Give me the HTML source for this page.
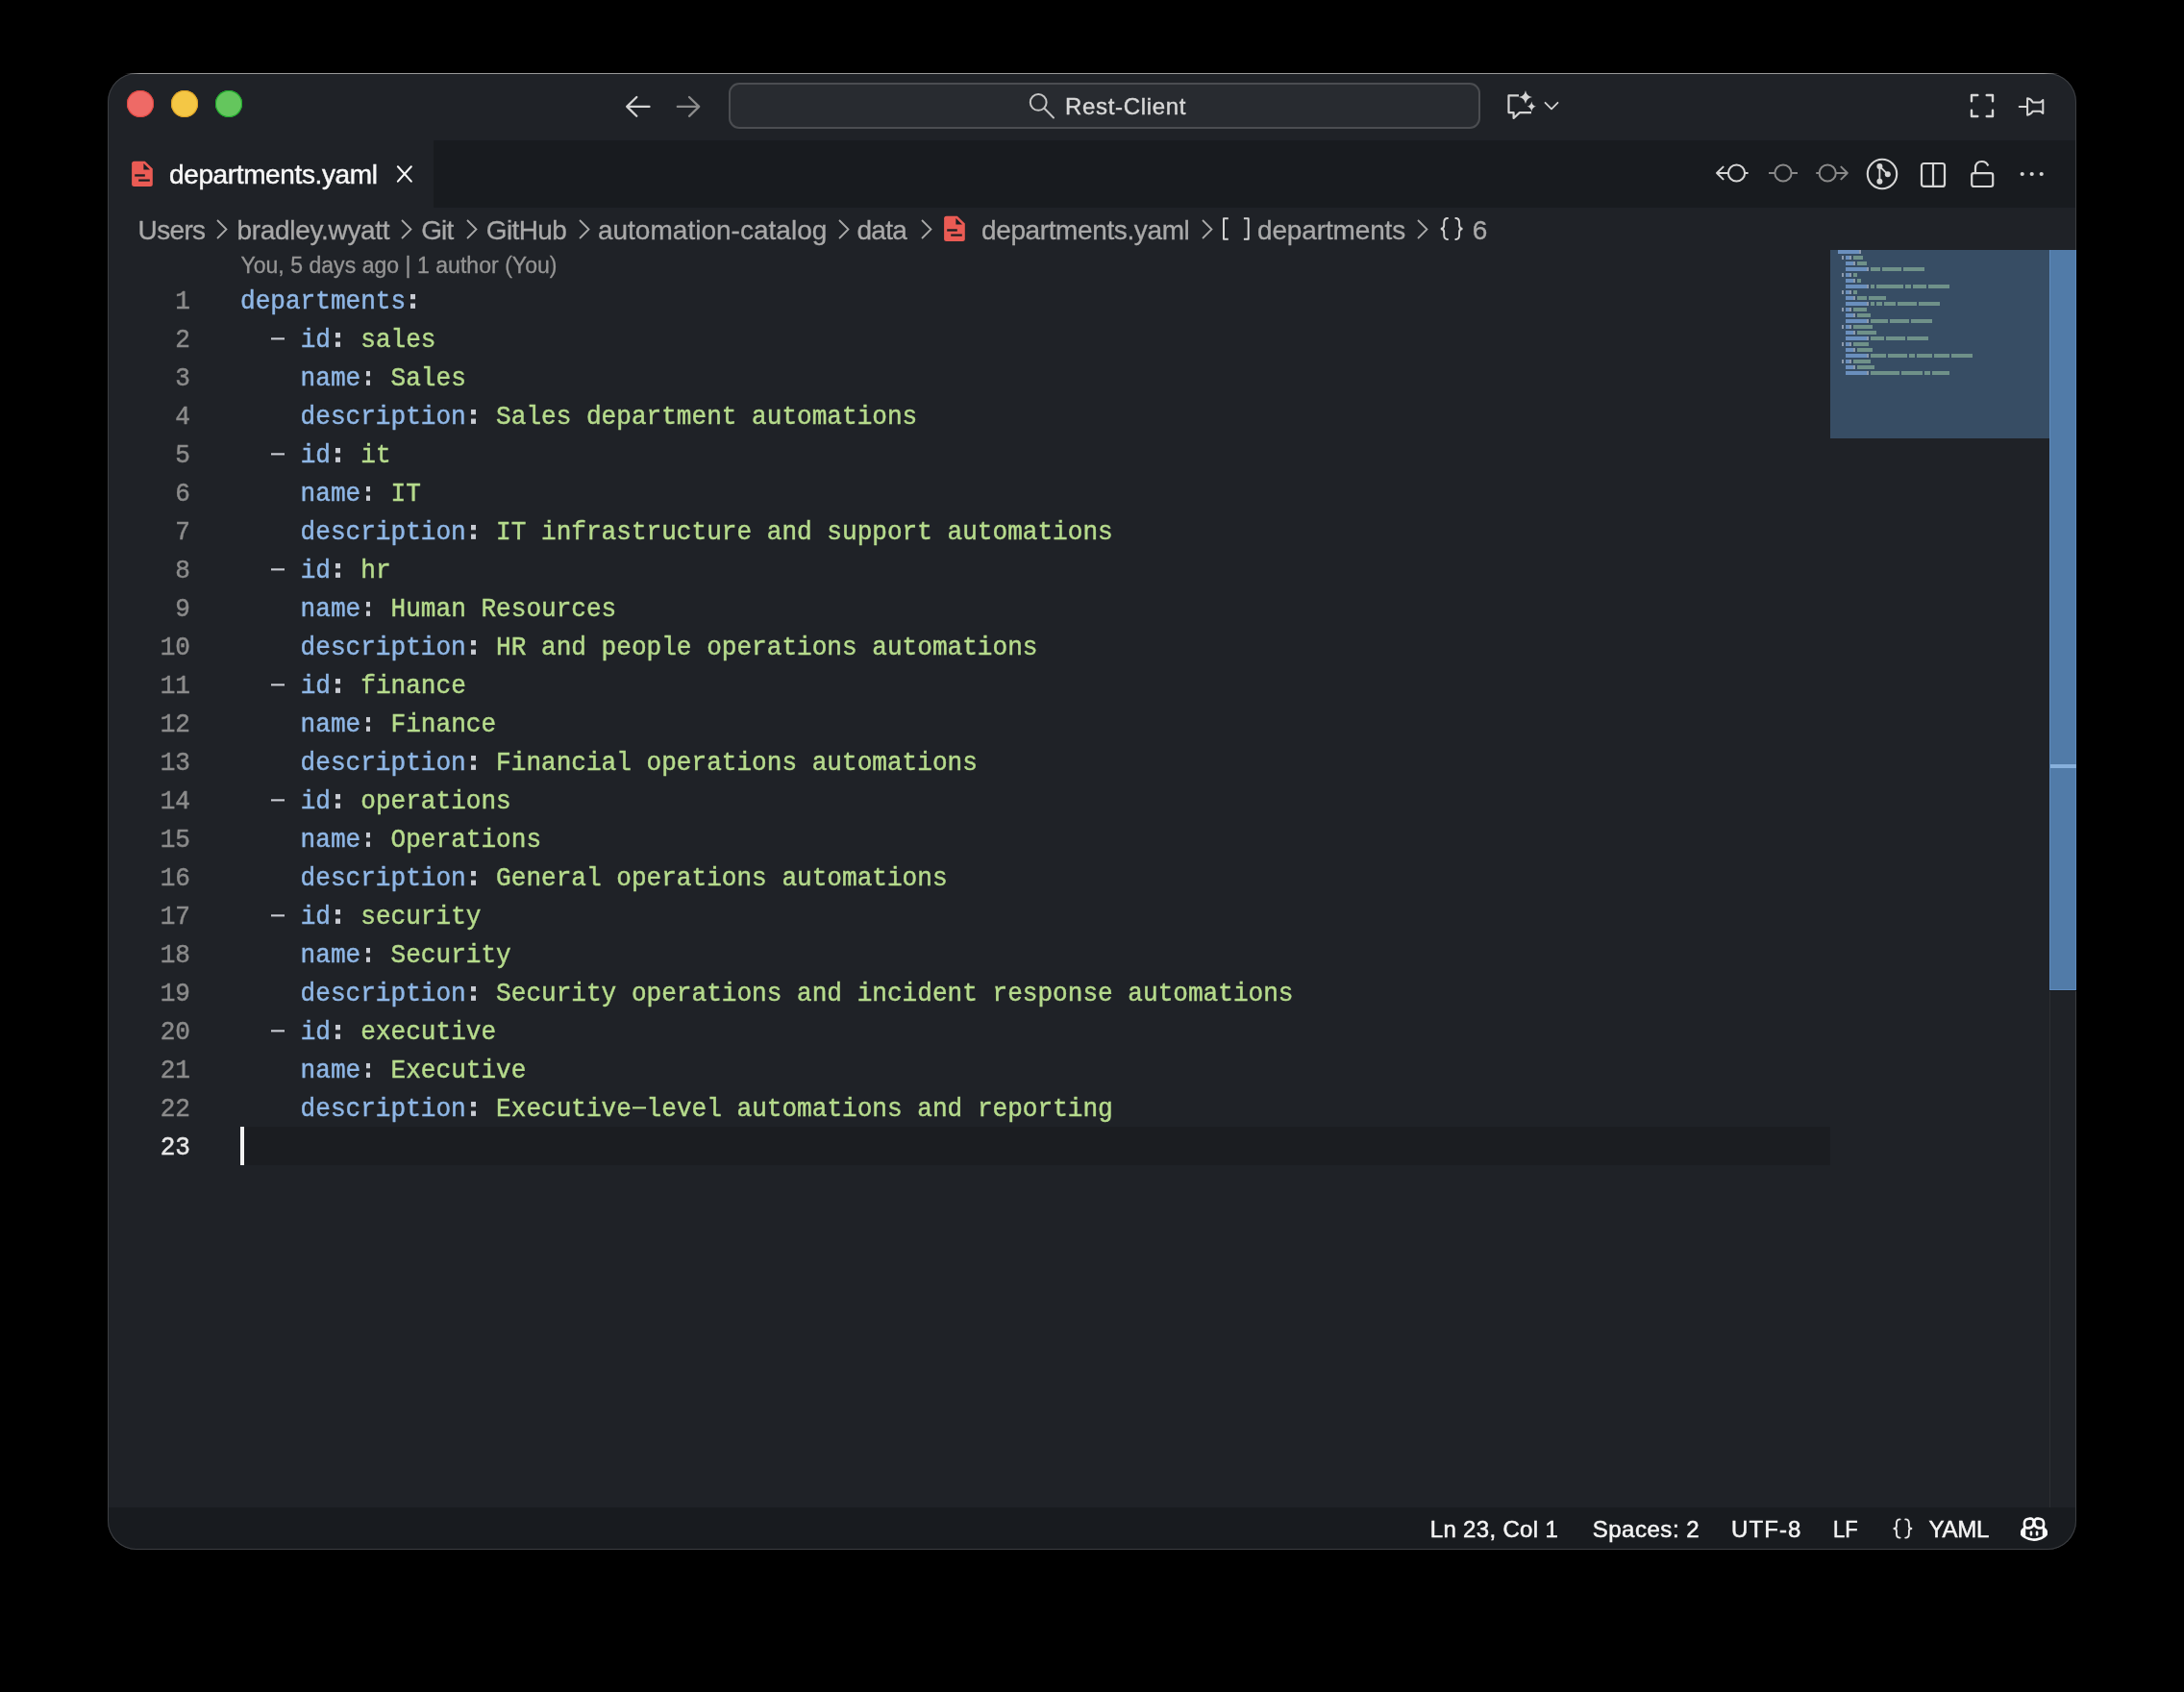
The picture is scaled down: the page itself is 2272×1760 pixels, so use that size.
<!DOCTYPE html>
<html><head><meta charset="utf-8">
<style>
html,body{margin:0;padding:0;background:#000;width:2272px;height:1760px;overflow:hidden}
*{box-sizing:border-box}
.abs{position:absolute}
#win{position:absolute;left:112px;top:76px;width:2048px;height:1536px;border-radius:30px;overflow:hidden;background:#1f2227}
#winborder{position:absolute;left:112px;top:76px;width:2048px;height:1536px;border-radius:30px;box-shadow:inset 0 0 0 1px #3c3e42;pointer-events:none}
.tl{position:absolute;width:28px;height:28px;border-radius:50%}
#tabbar{position:absolute;left:339px;top:70px;width:1709px;height:70px;background:#181b1f}
#status{position:absolute;left:0;top:1492px;width:2048px;height:44px;background:#181b1f}
#fg{position:absolute;left:0;top:0;width:2272px;height:1760px;font-family:"Liberation Sans",sans-serif;will-change:transform;-webkit-font-smoothing:antialiased}
.ln{position:absolute;left:112px;width:86px;text-align:right;font-family:"Liberation Mono",monospace;font-size:26.08px;line-height:40px;color:#8b8b8b;white-space:pre;transform:scaleY(1.065);transform-origin:0 29px;-webkit-text-stroke-width:0.45px}
.ln.act{color:#e8e8e8}
.cl{position:absolute;left:250px;font-family:"Liberation Mono",monospace;font-size:26.08px;line-height:40px;white-space:pre;color:#c8c8c8;transform:scaleY(1.065);transform-origin:0 29px;-webkit-text-stroke-width:0.45px}
.k{color:#8fb7e6}
.v{color:#b6db8c}
.p{color:#c9c9c9}
.c,.d{position:relative;color:transparent}
.c::before,.c::after,.d::before{content:"";position:absolute;background:#c8cbd2}
.c::before{left:5.3px;width:4.6px;top:7.6px;height:5.1px}
.c::after{left:5.3px;width:4.6px;top:17.0px;height:4.7px}
.d::before{left:1px;width:13.65px;top:12.8px;height:2.4px}
.v .d::before{background:#b6db8c}
.bc{position:absolute;top:218px;font-size:26px;line-height:40px;color:#a9a9a9;white-space:pre}
.st{position:absolute;top:1568px;font-size:24px;line-height:44px;color:#e6e6e6;white-space:pre}
svg{position:absolute;overflow:visible}
</style></head>
<body>
<div id="win">
  <div class="tl" style="left:20px;top:18px;background:#ee6a66;box-shadow:inset 0 0 0 1px #e0443e"></div>
  <div class="tl" style="left:66px;top:18px;background:#f4c745;box-shadow:inset 0 0 0 1px #dea123"></div>
  <div class="tl" style="left:112px;top:18px;background:#64c65d;box-shadow:inset 0 0 0 1px #1aab29"></div>
  <div id="tabbar"></div>
  <div id="status"></div>
  <!-- current line highlight -->
  <div class="abs" style="left:142px;top:1096px;width:1650px;height:40px;background:#1b1d21"></div>
  <!-- minimap slider -->
  <div class="abs" style="left:1792px;top:184px;width:228px;height:196px;background:#374d64"></div>
  <!-- scrollbar track border -->
  <div class="abs" style="left:2020px;top:380px;width:1px;height:1112px;background:#2c2e32"></div>
</div>

<div id="winborder"></div>
<div class="abs" style="left:130px;top:76px;width:2012px;height:1px;background:linear-gradient(90deg,rgba(154,154,154,0),#9a9a9a 16px,#9a9a9a calc(100% - 16px),rgba(154,154,154,0))"></div>
<div class="abs" style="left:2132px;top:260px;width:28px;height:770px;background:#517ba8;box-shadow:inset 1px 0 0 #5f8cc0,inset -1px 0 0 #5f8cc0,inset 0 -1px 0 #5f8cc0"></div>
<div class="abs" style="left:2132px;top:1030px;width:28px;height:1px;background:#1a1b1e"></div>
<div class="abs" style="left:2133px;top:795px;width:27px;height:4px;background:#87b0dc"></div>
<div id="fg">
  <!-- title bar nav arrows -->
  <svg style="left:650px;top:98px" width="28" height="26" viewBox="0 0 28 26"><path d="M12.3 3 L2.2 12.9 L12.3 22.8 M2.2 12.9 H25.5" fill="none" stroke="#d4d4d4" stroke-width="2.3" stroke-linecap="round" stroke-linejoin="round"/></svg>
  <svg style="left:702px;top:98px" width="28" height="26" viewBox="0 0 28 26"><path d="M15 3 L25.2 12.9 L15 22.8 M25.2 12.9 H2.8" fill="none" stroke="#8c8c8c" stroke-width="2.3" stroke-linecap="round" stroke-linejoin="round"/></svg>
  <!-- search box -->
  <div class="abs" style="left:758px;top:86px;width:782px;height:48px;border-radius:11px;border:2px solid #4b4d51;background:#282b30"></div>
  <svg style="left:1068px;top:95px" width="32" height="32" viewBox="0 0 32 32"><circle cx="12.2" cy="11.4" r="8.4" fill="none" stroke="#c4c4c4" stroke-width="2"/><path d="M18.4 17.8 L28 27.5" stroke="#c4c4c4" stroke-width="2" stroke-linecap="round"/></svg>
  
  <!-- copilot chat icon -->
  <svg style="left:1560px;top:90px" width="70" height="40" viewBox="0 0 70 40">
    <path d="M20 9.3 H9.5 V27.1 H14.6 V33 L20.8 27.1 H33" fill="none" stroke="#d4d4d4" stroke-width="2.2" stroke-linejoin="round"/>
    <path d="M27 4 Q28 10 34 11 Q28 12 27 18 Q26 12 20 11 Q26 10 27 4 Z" fill="#d4d4d4"/>
    <path d="M33.3 15.5 Q34 20 38 20.8 Q34 21.5 33.3 26 Q32.6 21.5 28.6 20.8 Q32.6 20 33.3 15.5 Z" fill="#d4d4d4"/>
    <path d="M47.5 16.8 L54 23.3 L60.5 16.8" fill="none" stroke="#d4d4d4" stroke-width="1.8" stroke-linecap="round" stroke-linejoin="round"/>
  </svg>
  <!-- fullscreen icon -->
  <svg style="left:2048px;top:96px" width="28" height="28" viewBox="0 0 28 28"><path d="M3 9.3 V3 H9.3 M18.7 3 H25 V9.3 M25 18.7 V25 H18.7 M9.3 25 H3 V18.7" fill="none" stroke="#d6d6d6" stroke-width="2.4" stroke-linecap="round" stroke-linejoin="round"/></svg>
  <!-- pin icon -->
  <svg style="left:2098px;top:98px" width="32" height="26" viewBox="0 0 32 26"><path d="M2.7 12.9 H11 M11.1 4.2 V21.7 Q15.2 21 16.6 17.7 H24.6 L27.3 19.9 V6.1 L24.6 8.4 H16.6 Q15.2 4.9 11.1 4.2 Z" fill="none" stroke="#d6d6d6" stroke-width="2" stroke-linejoin="round" stroke-linecap="round"/></svg>

  <!-- tab -->
  <svg style="left:136px;top:166px" width="24" height="30" viewBox="0 0 24 30">
    <path d="M3.6 1.8 H14.8 L22.8 9.4 V25.5 Q22.8 28 20.3 28 H3.6 Q1.1 28 1.1 25.5 V4.3 Q1.1 1.8 3.6 1.8 Z" fill="#ea5b54"/>
    <path d="M13.4 3.9 V10.5 H20 Z" fill="#1b1e22"/>
    <rect x="4.2" y="15.3" width="10.6" height="2.3" fill="#1b1e22"/>
    <rect x="8.2" y="20.5" width="11.6" height="2.2" fill="#1b1e22"/>
  </svg>
  
  <svg style="left:410px;top:170px" width="22" height="22" viewBox="0 0 22 22"><path d="M3.9 3.3 L17.8 18.6 M17.8 3.3 L3.9 18.6" stroke="#f8f8f8" stroke-width="2.1" stroke-linecap="round"/></svg>

  <!-- tab bar right icons -->
  <svg style="left:1780px;top:164px" width="44" height="32" viewBox="0 0 44 32"><circle cx="26.5" cy="16" r="8.6" fill="none" stroke="#d6d6d6" stroke-width="2"/><path d="M35.1 16 H37.9 M17.9 16 H6 M12.6 9.6 L6 16 L12.6 22.4" fill="none" stroke="#d6d6d6" stroke-width="2" stroke-linecap="round" stroke-linejoin="round"/></svg>
  <svg style="left:1836px;top:164px" width="40" height="32" viewBox="0 0 40 32"><circle cx="19" cy="16" r="8.6" fill="none" stroke="#8a8a8a" stroke-width="2"/><path d="M4 16 H10.4 M27.6 16 H34" fill="none" stroke="#8a8a8a" stroke-width="2" stroke-linecap="butt"/></svg>
  <svg style="left:1886px;top:164px" width="44" height="32" viewBox="0 0 44 32"><circle cx="15.2" cy="16" r="8.6" fill="none" stroke="#8a8a8a" stroke-width="2"/><path d="M4 16 H6.6 M23.8 16 H35.8 M29.4 9.6 L35.8 16 L29.4 22.4" fill="none" stroke="#8a8a8a" stroke-width="2" stroke-linecap="round" stroke-linejoin="round"/></svg>
  <svg style="left:1940px;top:163px" width="36" height="36" viewBox="0 0 36 36"><circle cx="18" cy="18" r="15.2" fill="none" stroke="#d6d6d6" stroke-width="2.1"/><path d="M15.4 10 V25.8 M15.4 10 L23.8 18.3" stroke="#d6d6d6" stroke-width="1.8"/><circle cx="15.4" cy="10" r="3" fill="#d6d6d6"/><circle cx="23.8" cy="18.3" r="3" fill="#d6d6d6"/><circle cx="15.4" cy="25.8" r="3" fill="#d6d6d6"/></svg>
  <svg style="left:1996px;top:167px" width="30" height="30" viewBox="0 0 30 30"><rect x="3" y="3" width="24" height="23.9" rx="2.5" fill="none" stroke="#d6d6d6" stroke-width="2.2"/><path d="M15 3 V26.9" stroke="#d6d6d6" stroke-width="2.2"/></svg>
  <svg style="left:2048px;top:164px" width="28" height="34" viewBox="0 0 28 34"><rect x="3.2" y="16.2" width="22" height="13.8" rx="2.2" fill="none" stroke="#d6d6d6" stroke-width="2.2"/><path d="M7 16 V11 Q7 4 13.8 4 Q18.5 4 20.3 8.5" fill="none" stroke="#d6d6d6" stroke-width="2.2"/></svg>
  <svg style="left:2098px;top:176px" width="32" height="10" viewBox="0 0 32 10"><circle cx="5.7" cy="5" r="2.1" fill="#d6d6d6"/><circle cx="15.7" cy="5" r="2.1" fill="#d6d6d6"/><circle cx="25.7" cy="5" r="2.1" fill="#d6d6d6"/></svg>

  <!-- breadcrumbs -->

  <svg style="left:0;top:0" width="2272" height="1760" viewBox="0 0 2272 1760">
    <path d="M1277.8 227.2 H1273 V248.8 H1277.8 M1293.9 227.2 H1298.7 V248.8 H1293.9" fill="none" stroke="#d2d2d2" stroke-width="2" stroke-linejoin="round" stroke-linecap="butt"/>
    <path d="M1506 227 C1503.2 227 1502.2 228.8 1502.2 231.5 V234.6 C1502.2 236.8 1501 237.9 1498.8 238 C1501 238.1 1502.2 239.2 1502.2 241.4 V244.5 C1502.2 247.2 1503.2 249 1506 249" fill="none" stroke="#d2d2d2" stroke-width="1.9" stroke-linecap="round"/>
    <path d="M1514.3 227 C1517.1 227 1518.1 228.8 1518.1 231.5 V234.6 C1518.1 236.8 1519.3 237.9 1521.5 238 C1519.3 238.1 1518.1 239.2 1518.1 241.4 V244.5 C1518.1 247.2 1517.1 249 1514.3 249" fill="none" stroke="#d2d2d2" stroke-width="1.9" stroke-linecap="round"/>
    <path d="M1976.6 1580.4 C1973.9 1580.4 1972.9 1582.1 1972.9 1584.7 V1587.7 C1972.9 1589.8 1971.7 1590 1969.6 1590 C1971.7 1590 1972.9 1590.2 1972.9 1592.3 V1595.3 C1972.9 1597.9 1973.9 1599.6 1976.6 1599.6" fill="none" stroke="#e6e6e6" stroke-width="1.9" stroke-linecap="round"/>
    <path d="M1982.2 1580.4 C1984.9 1580.4 1985.9 1582.1 1985.9 1584.7 V1587.7 C1985.9 1589.8 1987.1 1590 1989.2 1590 C1987.1 1590 1985.9 1590.2 1985.9 1592.3 V1595.3 C1985.9 1597.9 1984.9 1599.6 1982.2 1599.6" fill="none" stroke="#e6e6e6" stroke-width="1.9" stroke-linecap="round"/>
  </svg>
  <div class="abs" style="left:176px;top:167.60px;font-size:28px;line-height:28px;letter-spacing:-0.374px;color:#f8f8f8;white-space:pre;-webkit-text-stroke-width:0.45px;">departments.yaml</div>
<div class="abs" style="left:143.6px;top:225.80px;font-size:28px;line-height:28px;letter-spacing:-0.654px;color:#a9a9a9;white-space:pre;-webkit-text-stroke-width:0.3px;">Users</div>
<div class="abs" style="left:246.5px;top:225.80px;font-size:28px;line-height:28px;letter-spacing:-0.317px;color:#a9a9a9;white-space:pre;-webkit-text-stroke-width:0.3px;">bradley.wyatt</div>
<div class="abs" style="left:438.2px;top:225.80px;font-size:28px;line-height:28px;letter-spacing:-0.85px;color:#a9a9a9;white-space:pre;-webkit-text-stroke-width:0.3px;">Git</div>
<div class="abs" style="left:505.8px;top:225.80px;font-size:28px;line-height:28px;letter-spacing:-0.614px;color:#a9a9a9;white-space:pre;-webkit-text-stroke-width:0.3px;">GitHub</div>
<div class="abs" style="left:621.9px;top:225.80px;font-size:28px;line-height:28px;letter-spacing:0.016px;color:#a9a9a9;white-space:pre;-webkit-text-stroke-width:0.3px;">automation-catalog</div>
<div class="abs" style="left:891.5px;top:225.80px;font-size:28px;line-height:28px;letter-spacing:-0.741px;color:#a9a9a9;white-space:pre;-webkit-text-stroke-width:0.3px;">data</div>
<div class="abs" style="left:1021px;top:225.80px;font-size:28px;line-height:28px;letter-spacing:-0.381px;color:#a9a9a9;white-space:pre;-webkit-text-stroke-width:0.3px;">departments.yaml</div>
<div class="abs" style="left:1308px;top:225.80px;font-size:28px;line-height:28px;letter-spacing:-0.144px;color:#a9a9a9;white-space:pre;-webkit-text-stroke-width:0.3px;">departments</div>
<div class="abs" style="left:1531.8px;top:225.80px;font-size:28px;line-height:28px;letter-spacing:0px;color:#a9a9a9;white-space:pre;-webkit-text-stroke-width:0.3px;">6</div>
<div class="abs" style="left:1108px;top:98.68px;font-size:24px;line-height:24px;letter-spacing:0.672px;color:#d8d8d8;white-space:pre;-webkit-text-stroke-width:0.4px;">Rest-Client</div>
<div class="abs" style="left:250.4px;top:264.73px;font-size:23px;line-height:23px;letter-spacing:0.041px;color:#959595;white-space:pre;-webkit-text-stroke-width:0.3px;">You, 5 days ago | 1 author (You)</div>
<div class="abs" style="left:1487.75px;top:1578.88px;font-size:24px;line-height:24px;letter-spacing:0.325px;color:#f4f4f4;white-space:pre;-webkit-text-stroke-width:0.5px;">Ln 23, Col 1</div>
<div class="abs" style="left:1656.7px;top:1578.88px;font-size:24px;line-height:24px;letter-spacing:0.527px;color:#f4f4f4;white-space:pre;-webkit-text-stroke-width:0.5px;">Spaces: 2</div>
<div class="abs" style="left:1801px;top:1578.88px;font-size:24px;line-height:24px;letter-spacing:1.089px;color:#f4f4f4;white-space:pre;-webkit-text-stroke-width:0.5px;">UTF-8</div>
<div class="abs" style="left:1906.8px;top:1578.88px;font-size:24px;line-height:24px;letter-spacing:0px;color:#f4f4f4;white-space:pre;-webkit-text-stroke-width:0.5px;transform:scaleX(0.916);transform-origin:0 0;">LF</div>
<div class="abs" style="left:2006.6px;top:1578.88px;font-size:24px;line-height:24px;letter-spacing:-0.276px;color:#f4f4f4;white-space:pre;-webkit-text-stroke-width:0.5px;">YAML</div>
  <!-- chevrons -->
  <svg style="left:224px;top:227px" width="14" height="24" viewBox="0 0 14 24"><path d="M2 2 L11.5 11.5 L2 21" fill="none" stroke="#a9a9a9" stroke-width="1.8"/></svg>
  <svg style="left:416px;top:227px" width="14" height="24" viewBox="0 0 14 24"><path d="M2 2 L11.5 11.5 L2 21" fill="none" stroke="#a9a9a9" stroke-width="1.8"/></svg>
  <svg style="left:484px;top:227px" width="14" height="24" viewBox="0 0 14 24"><path d="M2 2 L11.5 11.5 L2 21" fill="none" stroke="#a9a9a9" stroke-width="1.8"/></svg>
  <svg style="left:601px;top:227px" width="14" height="24" viewBox="0 0 14 24"><path d="M2 2 L11.5 11.5 L2 21" fill="none" stroke="#a9a9a9" stroke-width="1.8"/></svg>
  <svg style="left:871px;top:227px" width="14" height="24" viewBox="0 0 14 24"><path d="M2 2 L11.5 11.5 L2 21" fill="none" stroke="#a9a9a9" stroke-width="1.8"/></svg>
  <svg style="left:957px;top:227px" width="14" height="24" viewBox="0 0 14 24"><path d="M2 2 L11.5 11.5 L2 21" fill="none" stroke="#a9a9a9" stroke-width="1.8"/></svg>
  <svg style="left:1249px;top:227px" width="14" height="24" viewBox="0 0 14 24"><path d="M2 2 L11.5 11.5 L2 21" fill="none" stroke="#a9a9a9" stroke-width="1.8"/></svg>
  <svg style="left:1473px;top:227px" width="14" height="24" viewBox="0 0 14 24"><path d="M2 2 L11.5 11.5 L2 21" fill="none" stroke="#a9a9a9" stroke-width="1.8"/></svg>
  <!-- breadcrumb file icon -->
  <svg style="left:980.6px;top:223.2px" width="24" height="30" viewBox="0 0 24 30">
    <path d="M3.6 1.8 H14.8 L22.8 9.4 V25.5 Q22.8 28 20.3 28 H3.6 Q1.1 28 1.1 25.5 V4.3 Q1.1 1.8 3.6 1.8 Z" fill="#ea5b54"/>
    <path d="M13.4 3.9 V10.5 H20 Z" fill="#1b1e22"/>
    <rect x="4.2" y="15.3" width="10.6" height="2.3" fill="#1b1e22"/>
    <rect x="8.2" y="20.5" width="11.6" height="2.2" fill="#1b1e22"/>
  </svg>

  <!-- blame -->
  

  <div class="ln" style="top:294px">1</div>
<div class="cl" style="top:294px"><span class="k">departments</span><span class="p"><span class=c>:</span></span></div>
<div class="ln" style="top:334px">2</div>
<div class="cl" style="top:334px"><span class="p">  <span class=d>-</span> </span><span class="k">id</span><span class="p"><span class=c>:</span> </span><span class="v">sales</span></div>
<div class="ln" style="top:374px">3</div>
<div class="cl" style="top:374px"><span class="p">    </span><span class="k">name</span><span class="p"><span class=c>:</span> </span><span class="v">Sales</span></div>
<div class="ln" style="top:414px">4</div>
<div class="cl" style="top:414px"><span class="p">    </span><span class="k">description</span><span class="p"><span class=c>:</span> </span><span class="v">Sales department automations</span></div>
<div class="ln" style="top:454px">5</div>
<div class="cl" style="top:454px"><span class="p">  <span class=d>-</span> </span><span class="k">id</span><span class="p"><span class=c>:</span> </span><span class="v">it</span></div>
<div class="ln" style="top:494px">6</div>
<div class="cl" style="top:494px"><span class="p">    </span><span class="k">name</span><span class="p"><span class=c>:</span> </span><span class="v">IT</span></div>
<div class="ln" style="top:534px">7</div>
<div class="cl" style="top:534px"><span class="p">    </span><span class="k">description</span><span class="p"><span class=c>:</span> </span><span class="v">IT infrastructure and support automations</span></div>
<div class="ln" style="top:574px">8</div>
<div class="cl" style="top:574px"><span class="p">  <span class=d>-</span> </span><span class="k">id</span><span class="p"><span class=c>:</span> </span><span class="v">hr</span></div>
<div class="ln" style="top:614px">9</div>
<div class="cl" style="top:614px"><span class="p">    </span><span class="k">name</span><span class="p"><span class=c>:</span> </span><span class="v">Human Resources</span></div>
<div class="ln" style="top:654px">10</div>
<div class="cl" style="top:654px"><span class="p">    </span><span class="k">description</span><span class="p"><span class=c>:</span> </span><span class="v">HR and people operations automations</span></div>
<div class="ln" style="top:694px">11</div>
<div class="cl" style="top:694px"><span class="p">  <span class=d>-</span> </span><span class="k">id</span><span class="p"><span class=c>:</span> </span><span class="v">finance</span></div>
<div class="ln" style="top:734px">12</div>
<div class="cl" style="top:734px"><span class="p">    </span><span class="k">name</span><span class="p"><span class=c>:</span> </span><span class="v">Finance</span></div>
<div class="ln" style="top:774px">13</div>
<div class="cl" style="top:774px"><span class="p">    </span><span class="k">description</span><span class="p"><span class=c>:</span> </span><span class="v">Financial operations automations</span></div>
<div class="ln" style="top:814px">14</div>
<div class="cl" style="top:814px"><span class="p">  <span class=d>-</span> </span><span class="k">id</span><span class="p"><span class=c>:</span> </span><span class="v">operations</span></div>
<div class="ln" style="top:854px">15</div>
<div class="cl" style="top:854px"><span class="p">    </span><span class="k">name</span><span class="p"><span class=c>:</span> </span><span class="v">Operations</span></div>
<div class="ln" style="top:894px">16</div>
<div class="cl" style="top:894px"><span class="p">    </span><span class="k">description</span><span class="p"><span class=c>:</span> </span><span class="v">General operations automations</span></div>
<div class="ln" style="top:934px">17</div>
<div class="cl" style="top:934px"><span class="p">  <span class=d>-</span> </span><span class="k">id</span><span class="p"><span class=c>:</span> </span><span class="v">security</span></div>
<div class="ln" style="top:974px">18</div>
<div class="cl" style="top:974px"><span class="p">    </span><span class="k">name</span><span class="p"><span class=c>:</span> </span><span class="v">Security</span></div>
<div class="ln" style="top:1014px">19</div>
<div class="cl" style="top:1014px"><span class="p">    </span><span class="k">description</span><span class="p"><span class=c>:</span> </span><span class="v">Security operations and incident response automations</span></div>
<div class="ln" style="top:1054px">20</div>
<div class="cl" style="top:1054px"><span class="p">  <span class=d>-</span> </span><span class="k">id</span><span class="p"><span class=c>:</span> </span><span class="v">executive</span></div>
<div class="ln" style="top:1094px">21</div>
<div class="cl" style="top:1094px"><span class="p">    </span><span class="k">name</span><span class="p"><span class=c>:</span> </span><span class="v">Executive</span></div>
<div class="ln" style="top:1134px">22</div>
<div class="cl" style="top:1134px"><span class="p">    </span><span class="k">description</span><span class="p"><span class=c>:</span> </span><span class="v">Executive<span class=d>-</span>level automations and reporting</span></div>
<div class="ln act" style="top:1174px">23</div>

  <!-- cursor -->
  <div class="abs" style="left:250px;top:1172px;width:4px;height:40px;background:#f2f2f2"></div>

  <div class="abs" style="left:1912px;top:260px;width:22px;height:4px;background:#6a8fbd"></div>
<div class="abs" style="left:1934px;top:260px;width:2px;height:4px;background:#8d9aac"></div>
<div class="abs" style="left:1916px;top:266px;width:2px;height:4px;background:#8d9aac"></div>
<div class="abs" style="left:1920px;top:266px;width:4px;height:4px;background:#6a8fbd"></div>
<div class="abs" style="left:1924px;top:266px;width:2px;height:4px;background:#8d9aac"></div>
<div class="abs" style="left:1928px;top:266px;width:10px;height:4px;background:#6f9189"></div>
<div class="abs" style="left:1920px;top:272px;width:8px;height:4px;background:#6a8fbd"></div>
<div class="abs" style="left:1928px;top:272px;width:2px;height:4px;background:#8d9aac"></div>
<div class="abs" style="left:1932px;top:272px;width:10px;height:4px;background:#6f9189"></div>
<div class="abs" style="left:1920px;top:278px;width:22px;height:4px;background:#6a8fbd"></div>
<div class="abs" style="left:1942px;top:278px;width:2px;height:4px;background:#8d9aac"></div>
<div class="abs" style="left:1946px;top:278px;width:10px;height:4px;background:#6f9189"></div>
<div class="abs" style="left:1958px;top:278px;width:20px;height:4px;background:#6f9189"></div>
<div class="abs" style="left:1980px;top:278px;width:22px;height:4px;background:#6f9189"></div>
<div class="abs" style="left:1916px;top:284px;width:2px;height:4px;background:#8d9aac"></div>
<div class="abs" style="left:1920px;top:284px;width:4px;height:4px;background:#6a8fbd"></div>
<div class="abs" style="left:1924px;top:284px;width:2px;height:4px;background:#8d9aac"></div>
<div class="abs" style="left:1928px;top:284px;width:4px;height:4px;background:#6f9189"></div>
<div class="abs" style="left:1920px;top:290px;width:8px;height:4px;background:#6a8fbd"></div>
<div class="abs" style="left:1928px;top:290px;width:2px;height:4px;background:#8d9aac"></div>
<div class="abs" style="left:1932px;top:290px;width:4px;height:4px;background:#6f9189"></div>
<div class="abs" style="left:1920px;top:296px;width:22px;height:4px;background:#6a8fbd"></div>
<div class="abs" style="left:1942px;top:296px;width:2px;height:4px;background:#8d9aac"></div>
<div class="abs" style="left:1946px;top:296px;width:4px;height:4px;background:#6f9189"></div>
<div class="abs" style="left:1952px;top:296px;width:28px;height:4px;background:#6f9189"></div>
<div class="abs" style="left:1982px;top:296px;width:6px;height:4px;background:#6f9189"></div>
<div class="abs" style="left:1990px;top:296px;width:14px;height:4px;background:#6f9189"></div>
<div class="abs" style="left:2006px;top:296px;width:22px;height:4px;background:#6f9189"></div>
<div class="abs" style="left:1916px;top:302px;width:2px;height:4px;background:#8d9aac"></div>
<div class="abs" style="left:1920px;top:302px;width:4px;height:4px;background:#6a8fbd"></div>
<div class="abs" style="left:1924px;top:302px;width:2px;height:4px;background:#8d9aac"></div>
<div class="abs" style="left:1928px;top:302px;width:4px;height:4px;background:#6f9189"></div>
<div class="abs" style="left:1920px;top:308px;width:8px;height:4px;background:#6a8fbd"></div>
<div class="abs" style="left:1928px;top:308px;width:2px;height:4px;background:#8d9aac"></div>
<div class="abs" style="left:1932px;top:308px;width:10px;height:4px;background:#6f9189"></div>
<div class="abs" style="left:1944px;top:308px;width:18px;height:4px;background:#6f9189"></div>
<div class="abs" style="left:1920px;top:314px;width:22px;height:4px;background:#6a8fbd"></div>
<div class="abs" style="left:1942px;top:314px;width:2px;height:4px;background:#8d9aac"></div>
<div class="abs" style="left:1946px;top:314px;width:4px;height:4px;background:#6f9189"></div>
<div class="abs" style="left:1952px;top:314px;width:6px;height:4px;background:#6f9189"></div>
<div class="abs" style="left:1960px;top:314px;width:12px;height:4px;background:#6f9189"></div>
<div class="abs" style="left:1974px;top:314px;width:20px;height:4px;background:#6f9189"></div>
<div class="abs" style="left:1996px;top:314px;width:22px;height:4px;background:#6f9189"></div>
<div class="abs" style="left:1916px;top:320px;width:2px;height:4px;background:#8d9aac"></div>
<div class="abs" style="left:1920px;top:320px;width:4px;height:4px;background:#6a8fbd"></div>
<div class="abs" style="left:1924px;top:320px;width:2px;height:4px;background:#8d9aac"></div>
<div class="abs" style="left:1928px;top:320px;width:14px;height:4px;background:#6f9189"></div>
<div class="abs" style="left:1920px;top:326px;width:8px;height:4px;background:#6a8fbd"></div>
<div class="abs" style="left:1928px;top:326px;width:2px;height:4px;background:#8d9aac"></div>
<div class="abs" style="left:1932px;top:326px;width:14px;height:4px;background:#6f9189"></div>
<div class="abs" style="left:1920px;top:332px;width:22px;height:4px;background:#6a8fbd"></div>
<div class="abs" style="left:1942px;top:332px;width:2px;height:4px;background:#8d9aac"></div>
<div class="abs" style="left:1946px;top:332px;width:18px;height:4px;background:#6f9189"></div>
<div class="abs" style="left:1966px;top:332px;width:20px;height:4px;background:#6f9189"></div>
<div class="abs" style="left:1988px;top:332px;width:22px;height:4px;background:#6f9189"></div>
<div class="abs" style="left:1916px;top:338px;width:2px;height:4px;background:#8d9aac"></div>
<div class="abs" style="left:1920px;top:338px;width:4px;height:4px;background:#6a8fbd"></div>
<div class="abs" style="left:1924px;top:338px;width:2px;height:4px;background:#8d9aac"></div>
<div class="abs" style="left:1928px;top:338px;width:20px;height:4px;background:#6f9189"></div>
<div class="abs" style="left:1920px;top:344px;width:8px;height:4px;background:#6a8fbd"></div>
<div class="abs" style="left:1928px;top:344px;width:2px;height:4px;background:#8d9aac"></div>
<div class="abs" style="left:1932px;top:344px;width:20px;height:4px;background:#6f9189"></div>
<div class="abs" style="left:1920px;top:350px;width:22px;height:4px;background:#6a8fbd"></div>
<div class="abs" style="left:1942px;top:350px;width:2px;height:4px;background:#8d9aac"></div>
<div class="abs" style="left:1946px;top:350px;width:14px;height:4px;background:#6f9189"></div>
<div class="abs" style="left:1962px;top:350px;width:20px;height:4px;background:#6f9189"></div>
<div class="abs" style="left:1984px;top:350px;width:22px;height:4px;background:#6f9189"></div>
<div class="abs" style="left:1916px;top:356px;width:2px;height:4px;background:#8d9aac"></div>
<div class="abs" style="left:1920px;top:356px;width:4px;height:4px;background:#6a8fbd"></div>
<div class="abs" style="left:1924px;top:356px;width:2px;height:4px;background:#8d9aac"></div>
<div class="abs" style="left:1928px;top:356px;width:16px;height:4px;background:#6f9189"></div>
<div class="abs" style="left:1920px;top:362px;width:8px;height:4px;background:#6a8fbd"></div>
<div class="abs" style="left:1928px;top:362px;width:2px;height:4px;background:#8d9aac"></div>
<div class="abs" style="left:1932px;top:362px;width:16px;height:4px;background:#6f9189"></div>
<div class="abs" style="left:1920px;top:368px;width:22px;height:4px;background:#6a8fbd"></div>
<div class="abs" style="left:1942px;top:368px;width:2px;height:4px;background:#8d9aac"></div>
<div class="abs" style="left:1946px;top:368px;width:16px;height:4px;background:#6f9189"></div>
<div class="abs" style="left:1964px;top:368px;width:20px;height:4px;background:#6f9189"></div>
<div class="abs" style="left:1986px;top:368px;width:6px;height:4px;background:#6f9189"></div>
<div class="abs" style="left:1994px;top:368px;width:16px;height:4px;background:#6f9189"></div>
<div class="abs" style="left:2012px;top:368px;width:16px;height:4px;background:#6f9189"></div>
<div class="abs" style="left:2030px;top:368px;width:22px;height:4px;background:#6f9189"></div>
<div class="abs" style="left:1916px;top:374px;width:2px;height:4px;background:#8d9aac"></div>
<div class="abs" style="left:1920px;top:374px;width:4px;height:4px;background:#6a8fbd"></div>
<div class="abs" style="left:1924px;top:374px;width:2px;height:4px;background:#8d9aac"></div>
<div class="abs" style="left:1928px;top:374px;width:18px;height:4px;background:#6f9189"></div>
<div class="abs" style="left:1920px;top:380px;width:8px;height:4px;background:#6a8fbd"></div>
<div class="abs" style="left:1928px;top:380px;width:2px;height:4px;background:#8d9aac"></div>
<div class="abs" style="left:1932px;top:380px;width:18px;height:4px;background:#6f9189"></div>
<div class="abs" style="left:1920px;top:386px;width:22px;height:4px;background:#6a8fbd"></div>
<div class="abs" style="left:1942px;top:386px;width:2px;height:4px;background:#8d9aac"></div>
<div class="abs" style="left:1946px;top:386px;width:30px;height:4px;background:#6f9189"></div>
<div class="abs" style="left:1978px;top:386px;width:22px;height:4px;background:#6f9189"></div>
<div class="abs" style="left:2002px;top:386px;width:6px;height:4px;background:#6f9189"></div>
<div class="abs" style="left:2010px;top:386px;width:18px;height:4px;background:#6f9189"></div>

  <!-- status bar -->
  
  <svg style="left:2102px;top:1576px" width="28" height="28" viewBox="0 0 16 16" preserveAspectRatio="none"><g transform="translate(0 0.35) scale(1 1.0)"><path fill="#fafafa" d="M7.998 15.035c-4.562 0-7.873-2.914-7.998-3.749V9.338c.085-.628.677-1.686 1.588-2.065.013-.07.024-.143.036-.218.029-.183.06-.384.126-.612-.201-.508-.254-1.084-.254-1.656 0-.87.128-1.769.693-2.484.579-.733 1.494-1.124 2.724-1.261 1.206-.134 2.262.034 2.944.765.05.053.096.108.139.165.044-.057.094-.112.143-.165.682-.731 1.738-.899 2.944-.765 1.23.137 2.145.528 2.724 1.261.566.715.693 1.614.693 2.484 0 .572-.053 1.148-.254 1.656.066.228.098.429.126.612.012.076.024.148.037.218.924.385 1.522 1.471 1.591 2.095v1.872c0 .766-3.351 3.795-8.002 3.795Zm0-1.485c2.28 0 4.584-1.11 5.002-1.433V7.862l-.023-.116c-.49.21-1.075.291-1.727.291-1.146 0-2.059-.327-2.71-.991A3.222 3.222 0 0 1 8 6.303a3.24 3.24 0 0 1-.544.743c-.65.664-1.563.991-2.71.991-.652 0-1.236-.081-1.727-.291l-.023.116v4.255c.419.323 2.722 1.433 5.002 1.433ZM6.762 2.83c-.193-.206-.637-.413-1.682-.297-1.019.113-1.479.404-1.713.7-.247.312-.369.789-.369 1.554 0 .793.129 1.171.308 1.371.162.181.519.379 1.442.379.853 0 1.339-.235 1.638-.54.315-.322.527-.827.617-1.553.117-.935-.037-1.395-.241-1.614Zm4.155-.297c-1.044-.116-1.488.091-1.681.297-.204.219-.359.679-.242 1.614.091.726.303 1.231.618 1.553.299.305.784.54 1.638.54.922 0 1.28-.198 1.442-.379.179-.2.308-.578.308-1.371 0-.765-.123-1.242-.37-1.554-.233-.296-.693-.587-1.713-.7Z"/><path fill="#fafafa" d="M6.25 9.037a.75.75 0 0 1 .75.75v1.501a.75.75 0 0 1-1.5 0V9.787a.75.75 0 0 1 .75-.75Zm4.25.75v1.501a.75.75 0 0 1-1.5 0V9.787a.75.75 0 0 1 1.5 0Z"/></g></svg>
</div>
</body></html>
